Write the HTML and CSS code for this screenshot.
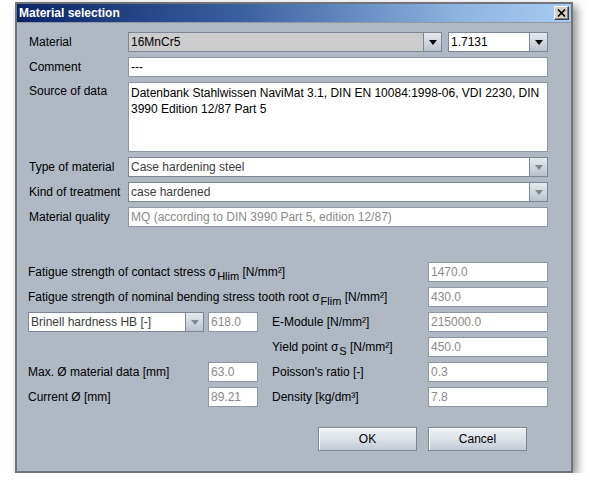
FILE: index.html
```html
<!DOCTYPE html>
<html>
<head>
<meta charset="utf-8">
<link rel="stylesheet" href="styles.css">
</head>
<body>
<div class="window">
  <div class="titlebar">
    <span class="title">Material selection</span>
    <span class="close"><svg width="9" height="8" viewBox="0 0 9 8"><path d="M1 0.5L8 7.5M8 0.5L1 7.5" stroke="#000" stroke-width="1.6" fill="none"/></svg></span>
  </div>
  <div class="content">
    <div class="form-top">
      <span class="lbl">Material</span>
      <div class="material-row">
        <div class="combo combo-main gray"><span class="val">16MnCr5</span><span class="arrow"><i class="tri"></i></span></div>
        <div class="combo combo-num"><span class="val">1.7131</span><span class="arrow"><i class="tri"></i></span></div>
      </div>
      <span class="lbl">Comment</span>
      <div class="field">---</div>
      <span class="lbl lbl-top">Source of data</span>
      <div class="field textarea">Datenbank Stahlwissen NaviMat 3.1, DIN EN 10084:1998-06, VDI 2230, DIN<br>3990 Edition 12/87 Part 5</div>
      <span class="lbl">Type of material</span>
      <div class="combo disabled"><span class="val">Case hardening steel</span><span class="arrow"><i class="tri"></i></span></div>
      <span class="lbl">Kind of treatment</span>
      <div class="combo disabled"><span class="val">case hardened</span><span class="arrow"><i class="tri"></i></span></div>
      <span class="lbl">Material quality</span>
      <div class="field dim">MQ (according to DIN 3990 Part 5, edition 12/87)</div>
    </div>

    <div class="form-bottom">
      <span class="lbl span3">Fatigue strength of contact stress σ<sub>Hlim</sub>&nbsp;[N/mm²]</span>
      <div class="field dim">1470.0</div>
      <span class="lbl span3">Fatigue strength of nominal bending stress tooth root σ<sub>Flim</sub>&nbsp;[N/mm²]</span>
      <div class="field dim">430.0</div>

      <div class="combo disabled small"><span class="val">Brinell hardness HB [-]</span><span class="arrow"><i class="tri"></i></span></div>
      <div class="field dim short">618.0</div>
      <span class="lbl rlbl">E-Module [N/mm²]</span>
      <div class="field dim">215000.0</div>

      <span class="lbl"></span>
      <span class="lbl"></span>
      <span class="lbl rlbl">Yield point σ<sub>S</sub>&nbsp;[N/mm²]</span>
      <div class="field dim">450.0</div>

      <span class="lbl">Max. Ø material data [mm]</span>
      <div class="field dim short">63.0</div>
      <span class="lbl rlbl">Poisson's ratio [-]</span>
      <div class="field dim">0.3</div>

      <span class="lbl">Current Ø [mm]</span>
      <div class="field dim short">89.21</div>
      <span class="lbl rlbl">Density [kg/dm³]</span>
      <div class="field dim">7.8</div>
    </div>

    <div class="buttons">
      <button class="btn">OK</button>
      <button class="btn">Cancel</button>
    </div>
  </div>
</div>
</body>
</html>
```
FILE: styles.css
```css
html, body {
  margin: 0;
  padding: 0;
  background: #ffffff;
}
body {
  font-family: "Liberation Sans", Arial, sans-serif;
  font-size: 12px;
  color: #000;
}
.window {
  margin: 2px 0 0 15px;
  width: 554px;
  height: 467px;
  border: 2px solid #6f747a;
  background: #afb8c3;
  box-shadow: 4px 4px 9px rgba(0, 0, 0, 0.45);
  display: flex;
  flex-direction: column;
}
.titlebar {
  height: 18px;
  flex: none;
  background: linear-gradient(to right, #0b2468 0%, #3a5f9e 40%, #8fb4e0 80%, #a7cbf1 100%);
  display: flex;
  align-items: center;
  justify-content: space-between;
  padding: 0 2px 0 2px;
  border-bottom: 1px solid #8e99a6;
}
.title {
  color: #fff;
  font-weight: bold;
  font-size: 12px;
}
.close {
  width: 13px;
  height: 12px;
  background: #d4d0c8;
  border: 1px solid;
  border-color: #fff #404040 #404040 #fff;
  display: flex;
  align-items: center;
  justify-content: center;
  box-shadow: inset -1px -1px 0 #808080;
}
.content {
  flex: 1;
  padding: 9px 23px 0 12px;
  display: flex;
  flex-direction: column;
}
.form-top {
  display: grid;
  grid-template-columns: 99px 1fr;
  grid-template-rows: 20px 20px 70px 20px 20px 20px;
  row-gap: 5px;
}
.lbl {
  display: flex;
  align-items: center;
  white-space: nowrap;
  height: 20px;
}
.lbl-top {
  align-items: flex-start;
  padding-top: 2px;
  height: auto;
}
sub {
  font-size: 11px;
  position: relative;
  top: 4px;
  vertical-align: baseline;
  line-height: 0;
  margin-left: 1px;
}
.field {
  box-sizing: border-box;
  height: 20px;
  background: #fff;
  border: 1px solid #8d97a3;
  padding: 0 2px;
  display: flex;
  align-items: center;
  white-space: nowrap;
  overflow: hidden;
  color: #000;
}
.field.dim {
  color: #8a8a8a;
}
.textarea {
  display: block;
  height: 70px;
  padding: 2px 2px;
  line-height: 16px;
}
.material-row {
  display: flex;
  gap: 6px;
}
.combo {
  box-sizing: border-box;
  height: 20px;
  border: 1px solid #7d8793;
  background: #fff;
  display: flex;
  white-space: nowrap;
}
.combo .val {
  flex: 1;
  display: flex;
  align-items: center;
  padding: 0 2px;
  overflow: hidden;
}
.combo.gray .val {
  background: #cccccc;
}
.combo.disabled .val {
  color: #3c3c3c;
}
.arrow {
  width: 17px;
  flex: none;
  border-left: 1px solid #7d8793;
  background: linear-gradient(to bottom, #e6e9ee 0%, #cfd5dd 55%, #b9c1cc 100%);
  display: flex;
  align-items: center;
  justify-content: center;
}
.tri {
  width: 0;
  height: 0;
  border-left: 4px solid transparent;
  border-right: 4px solid transparent;
  border-top: 5px solid #000;
  margin-top: 1px;
}
.disabled .tri {
  border-top-color: #7f8790;
}
.combo-main {
  width: 314px;
}
.combo-num {
  width: 100px;
}
.form-bottom {
  margin-top: 35px;
  margin-left: -1px;
  display: grid;
  grid-template-columns: 176px 54px 170px 120px;
  grid-auto-rows: 20px;
  row-gap: 5px;
}
.span3 {
  grid-column: span 3;
}
.combo.small {
  width: 176px;
}
.field.short {
  margin-left: 4px;
  width: 50px;
}
.rlbl {
  padding-left: 14px;
}
.buttons {
  margin-top: 20px;
  display: flex;
  justify-content: flex-end;
  gap: 11px;
  padding-right: 21px;
}
.btn {
  box-sizing: border-box;
  width: 99px;
  height: 24px;
  font-family: "Liberation Sans", Arial, sans-serif;
  font-size: 12px;
  color: #000;
  border: 1px solid #7d8793;
  background: linear-gradient(to bottom, #eef0f3 0%, #dde2e8 50%, #c3cad3 100%);
  box-shadow: inset 1px 1px 0 #fff;
  padding: 0;
}
```
